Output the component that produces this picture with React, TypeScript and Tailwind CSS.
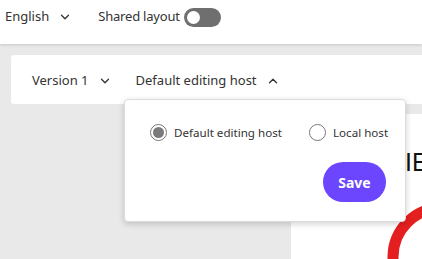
import { ChevronDown, ChevronUp } from "lucide-react";

export default function App() {
    return (
        <div className="relative w-[422px] h-[259px] overflow-hidden bg-[#e9e9e9] text-[#333333] text-[13px] whitespace-nowrap" style={{ fontFamily: '"Noto Sans", "Open Sans", sans-serif' }}>
            {/* barra superior */}
            <div className="h-[44px] bg-white flex items-start pt-[7px] pl-[5px] shadow-[0_1px_3px_rgba(0,0,0,0.15)] relative z-10">
                <div className="flex items-center h-[20px]">
                    <span>English</span>
                    <ChevronDown className="ml-[9px] w-[14px] h-[14px]" strokeWidth={2.2} />
                    <span className="ml-[26px] tracking-[-0.2px]">Shared layout</span>
                    <div className="ml-[4px] w-[37px] h-[19px] rounded-full bg-[#6f6f6f] flex items-center px-[3px]">
                        <div className="w-[13px] h-[13px] rounded-full bg-white" />
                    </div>
                </div>
            </div>

            {/* barra de versão */}
            <div className="pl-[11px] pt-[11px]">
                <div className="h-[49px] bg-white rounded-l-[3px] flex items-center pl-[21px] pt-[2px]">
                    <span>Version 1</span>
                    <ChevronDown className="ml-[9px] w-[14px] h-[14px]" strokeWidth={2.2} />
                    <span className="ml-[24px]">Default editing host</span>
                    <ChevronUp className="ml-[9px] w-[14px] h-[14px]" strokeWidth={2.2} />
                </div>
            </div>

            {/* área de conteúdo */}
            <div className="flex mt-[10px] h-[200px]">
                <div className="w-[291px]" />
                <div className="relative flex-1 bg-white">
                    <span className="absolute left-[114px] top-[36px] text-[25px] leading-none text-[#111]" style={{ fontFamily: '"Liberation Sans", sans-serif' }}>IE</span>
                    <svg className="absolute left-[96px] top-[88px]" width="110" height="110" viewBox="0 0 110 110">
                        <circle cx="55" cy="55" r="49" fill="none" stroke="#e41f1f" strokeWidth="11" />
                    </svg>
                </div>
            </div>

            {/* dropdown */}
            <div className="absolute left-[124px] top-[99px] w-[282px] h-[123px] bg-white border border-[#dcdcdc] rounded-[4px] shadow-[0_2px_6px_rgba(0,0,0,0.18)] z-20">
                <div className="flex items-center pl-[25px] pt-[24px] text-[11.6px]">
                    <div className="w-[17px] h-[17px] rounded-full border border-[#777] flex items-center justify-center">
                        <div className="w-[11px] h-[11px] rounded-full bg-[#7a7a7a]" />
                    </div>
                    <span className="ml-[7px] w-[105px]">Default editing host</span>
                    <div className="ml-[30px] w-[17px] h-[17px] rounded-full border border-[#777]" />
                    <span className="ml-[7px]">Local host</span>
                </div>
                <div className="flex justify-end pr-[19px] mt-[21px]">
                    <button className="w-[63px] h-[40px] rounded-full bg-[#6c46fe] text-white font-bold text-[14px]">Save</button>
                </div>
            </div>
        </div>
    );
}
